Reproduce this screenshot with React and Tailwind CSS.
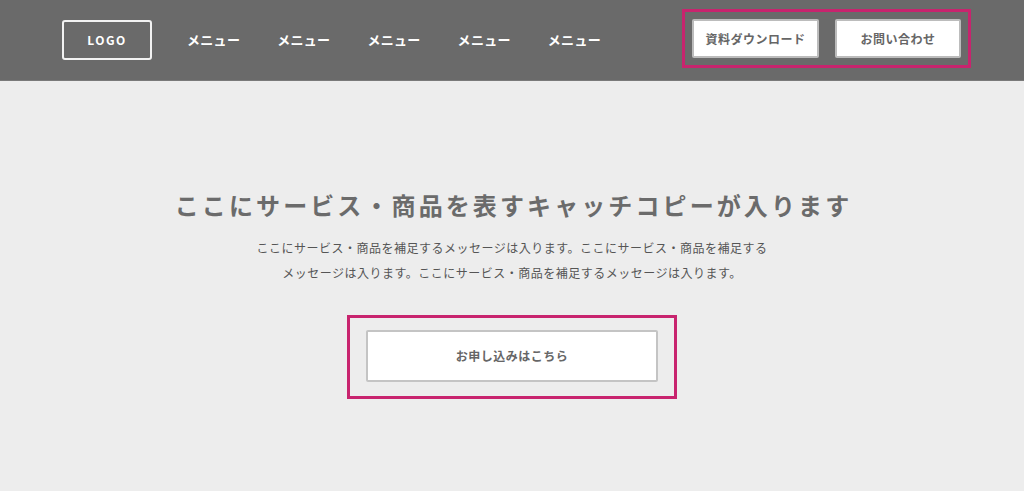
// App.jsx — LP hero with header (annotated CTA areas)
const MENUS = ['メニュー', 'メニュー', 'メニュー', 'メニュー', 'メニュー'];

const font = { fontFamily: '"Noto Sans CJK JP", "Noto Sans", sans-serif' };

const App = () => (
  <div className="w-[1024px] h-[491px] bg-[#ededed] flex flex-col" style={font}>
    <header className="h-[81px] shrink-0 bg-[#6a6a6a] flex items-center justify-between pl-[62px] pr-[53px] border-b border-[#7a7a7a]">
      <div className="flex items-center gap-[35px]">
        <div className="w-[90px] h-[40px] border-2 border-[#f2f2f2] rounded-[3px] flex items-center justify-center text-white text-[12px] font-bold tracking-[1.5px]">
          LOGO
        </div>
        <nav className="flex items-center gap-[37px]">
          {MENUS.map((m, i) => (
            <a key={i} className="text-white text-[13px] font-bold tracking-[0.3px]">{m}</a>
          ))}
        </nav>
      </div>
      <div className="flex items-center gap-[16px] border-[3px] border-[#c8246e] p-[7px] mb-[3px]">
        <button className="w-[127px] h-[39px] bg-white border-2 border-[#bcbcbc] rounded-[2px] text-[12px] font-bold text-[#666] tracking-[0.5px]">
          資料ダウンロード
        </button>
        <button className="w-[126px] h-[39px] bg-white border-2 border-[#bcbcbc] rounded-[2px] text-[12px] font-bold text-[#666] tracking-[0.5px]">
          お問い合わせ
        </button>
      </div>
    </header>

    <main className="flex-1 flex flex-col items-center pt-[106px]">
      <h1 className="text-[24px] leading-[36px] font-bold text-[#6b6b6b] tracking-[3.1px] pl-[3px]">
        ここにサービス・商品を表すキャッチコピーが入ります
      </h1>
      <p className="mt-[12px] text-[12px] leading-[25px] text-[#555] tracking-[0.5px] text-center">
        ここにサービス・商品を補足するメッセージは入ります。ここにサービス・商品を補足する
        <br />
        メッセージは入ります。ここにサービス・商品を補足するメッセージは入ります。
      </p>
      <div className="mt-[30px] border-[3px] border-[#c8246e] px-[16px] pt-[12px] pb-[14px]">
        <button className="w-[292px] h-[52px] bg-white border-2 border-[#c4c4c4] rounded-[2px] text-[12px] font-bold text-[#666] tracking-[0.5px]">
          お申し込みはこちら
        </button>
      </div>
    </main>
  </div>
);

export default App;
